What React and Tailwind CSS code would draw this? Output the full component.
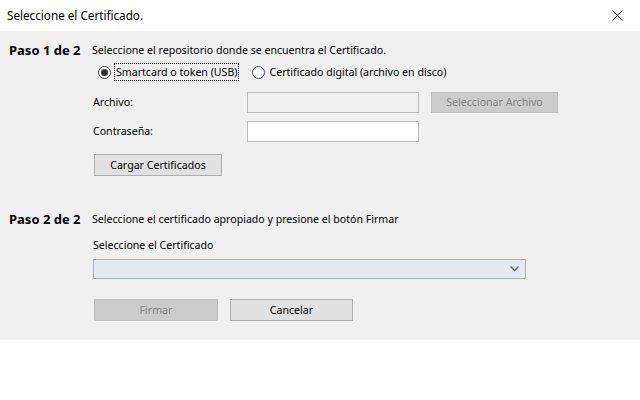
export default function App() {
  return (
    <div className="w-[640px] h-[400px] bg-white text-black font-['Noto_Sans',sans-serif] text-[10.6px] leading-none">
      <div className="h-[31px] flex items-center justify-between pl-[7px] pr-[17px]">
        <span className="text-[11.7px]">Seleccione el Certificado.</span>
        <svg width="11" height="11" viewBox="0 0 11 11">
          <path d="M0.5 0.5 L10.5 10.5 M10.5 0.5 L0.5 10.5" stroke="#1a1a1a" strokeWidth="1" />
        </svg>
      </div>
      <div className="h-[309px] bg-[#f0f0f0] pt-[9px] pl-[9px] flex flex-col">
        <div className="flex items-center h-[20px]">
          <span className="w-[83px] font-bold text-[13px]">Paso 1 de 2</span>
          <span>Seleccione el repositorio donde se encuentra el Certificado.</span>
        </div>
        <div className="ml-[89px] mt-[2px] flex items-center h-[20px]">
          <span className="w-[13px] h-[13px] rounded-full border border-[#333333] bg-white flex items-center justify-center">
            <span className="w-[7px] h-[7px] rounded-full bg-[#333333]"></span>
          </span>
          <span className="ml-[3px] border border-dotted border-black px-[1px] h-[18px] flex items-center">Smartcard o token (USB)</span>
          <span className="ml-[13px] w-[13px] h-[13px] rounded-full border border-[#2a4f7a] bg-white"></span>
          <span className="ml-[4px]">Certificado digital (archivo en disco)</span>
        </div>
        <div className="ml-[84px] mt-[10px] flex items-center h-[21px]">
          <span className="w-[154px]">Archivo:</span>
          <div className="w-[172px] h-[21px] border border-[#bcbcbc] bg-[#f0f0f0]"></div>
          <div className="ml-[12px] w-[127px] h-[21px] bg-[#cccccc] border border-[#bfbfbf] text-[#838383] flex items-center justify-center">Seleccionar Archivo</div>
        </div>
        <div className="ml-[84px] mt-[8px] flex items-center h-[21px]">
          <span className="w-[154px]">Contraseña:</span>
          <div className="w-[172px] h-[21px] border border-[#bcbcbc] bg-white"></div>
        </div>
        <div className="ml-[85px] mt-[12px] w-[128px] h-[22px] bg-[#e1e1e1] border border-[#adadad] flex items-center justify-center">Cargar Certificados</div>
        <div className="flex items-center h-[20px] mt-[33px]">
          <span className="w-[83px] font-bold text-[13px]">Paso 2 de 2</span>
          <span>Seleccione el certificado apropiado y presione el botón Firmar</span>
        </div>
        <div className="ml-[84px] mt-[6px] h-[20px] flex items-center">Seleccione el Certificado</div>
        <div className="ml-[84px] mt-[4px] w-[433px] h-[20px] bg-[#e5eaf1] border border-[#acacac] flex items-center justify-end pr-[6px]">
          <svg width="9" height="6" viewBox="0 0 9 6">
            <path d="M0.5 0.5 L4.5 4.5 L8.5 0.5" stroke="#606060" strokeWidth="1.3" fill="none" />
          </svg>
        </div>
        <div className="ml-[85px] mt-[20px] flex items-center h-[22px]">
          <div className="w-[124px] h-[22px] bg-[#cccccc] border border-[#bfbfbf] text-[#838383] flex items-center justify-center">Firmar</div>
          <div className="ml-[12px] w-[123px] h-[22px] bg-[#e1e1e1] border border-[#adadad] flex items-center justify-center">Cancelar</div>
        </div>
      </div>
    </div>
  );
}
